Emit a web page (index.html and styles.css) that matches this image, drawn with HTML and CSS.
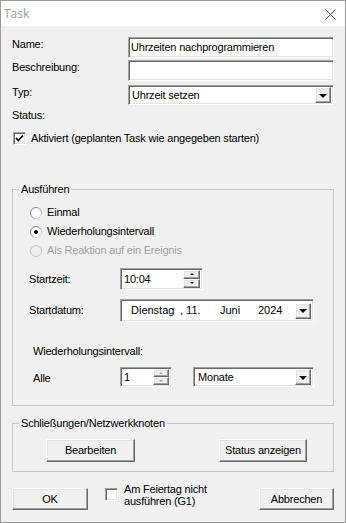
FILE: index.html
```html
<!DOCTYPE html>
<html lang="de">
<head>
    <meta charset="UTF-8">
    <title>Task</title>
    <link rel="stylesheet" href="styles.css">
</head>
<body>
    <div class="window">
        <div class="titlebar">
            <span class="title">Task</span>
            <svg class="close" width="11" height="11" viewBox="0 0 11 11">
                <path d="M0.5 0.5 L10.5 10.5 M10.5 0.5 L0.5 10.5" stroke="#5a5a5a" stroke-width="1" fill="none"/>
            </svg>
        </div>
        <div class="content">
            <div class="row row-name">
                <span class="lbl">Name:</span>
                <div class="edit sunken">Uhrzeiten nachprogrammieren</div>
            </div>
            <div class="row row-desc">
                <span class="lbl">Beschreibung:</span>
                <div class="edit sunken"></div>
            </div>
            <div class="row row-typ">
                <span class="lbl">Typ:</span>
                <div class="combo sunken">
                    <span class="combo-text">Uhrzeit setzen</span>
                    <span class="drop raised"><i class="tri"></i></span>
                </div>
            </div>
            <div class="status">Status:</div>
            <div class="check-row">
                <span class="check sunken">
                    <svg width="9" height="9" viewBox="0 0 9 9"><path d="M1 4 L3.3 6.5 L8 1.5" stroke="#000" stroke-width="1.8" fill="none"/></svg>
                </span>
                <span>Aktiviert (geplanten Task wie angegeben starten)</span>
            </div>

            <fieldset class="group group-run">
                <legend>Ausführen</legend>
                <div class="radio-row">
                    <svg class="radio" width="12" height="12" viewBox="0 0 12 12">
                        <circle cx="6" cy="6" r="5.5" fill="#fff" stroke="url(#ring)"/>
                    </svg>
                    <span>Einmal</span>
                </div>
                <div class="radio-row">
                    <svg class="radio" width="12" height="12" viewBox="0 0 12 12">
                        <defs>
                            <linearGradient id="ring" x1="0" y1="0" x2="1" y2="1">
                                <stop offset="0" stop-color="#6e6e6e"/>
                                <stop offset="0.5" stop-color="#9a9a9a"/>
                                <stop offset="1" stop-color="#f4f4f4"/>
                            </linearGradient>
                        </defs>
                        <circle cx="6" cy="6" r="5.5" fill="#fff" stroke="url(#ring)"/>
                        <circle cx="6" cy="6" r="2" fill="#000"/>
                    </svg>
                    <span>Wiederholungsintervall</span>
                </div>
                <div class="radio-row disabled">
                    <svg class="radio" width="12" height="12" viewBox="0 0 12 12">
                        <circle cx="6" cy="6" r="5.5" fill="#f0f0f0" stroke="#c4c4c4"/>
                    </svg>
                    <span>Als Reaktion auf ein Ereignis</span>
                </div>

                <div class="field-row row-time">
                    <span class="lbl-inner">Startzeit:</span>
                    <div class="spin spin-time sunken">
                        <span class="spin-text">10:04</span>
                        <span class="spin-btns">
                            <span class="spin-btn raised"><i class="tri-up"></i></span>
                            <span class="spin-btn raised"><i class="tri-small"></i></span>
                        </span>
                    </div>
                </div>
                <div class="field-row row-date">
                    <span class="lbl-inner">Startdatum:</span>
                    <div class="date sunken">
                        <span class="d-day">Dienstag</span>
                        <span class="d-num">, 11.</span>
                        <span class="d-month">Juni</span>
                        <span class="d-year">2024</span>
                        <span class="drop raised"><i class="tri"></i></span>
                    </div>
                </div>
                <div class="interval-lbl">Wiederholungsintervall:</div>
                <div class="field-row row-every">
                    <span class="lbl-every">Alle</span>
                    <div class="spin spin-count sunken">
                        <span class="spin-text">1</span>
                        <span class="spin-btns faded">
                            <span class="spin-btn raised"><i class="tri-up"></i></span>
                            <span class="spin-btn raised"><i class="tri-small"></i></span>
                        </span>
                    </div>
                    <div class="combo combo-unit sunken">
                        <span class="combo-text">Monate</span>
                        <span class="drop raised"><i class="tri"></i></span>
                    </div>
                </div>
            </fieldset>

            <fieldset class="group group-locks">
                <legend>Schließungen/Netzwerkknoten</legend>
                <div class="btn-row">
                    <span class="button raised btn-edit">Bearbeiten</span>
                    <span class="button raised btn-status">Status anzeigen</span>
                </div>
            </fieldset>

            <div class="footer">
                <span class="button raised btn-ok">OK</span>
                <span class="check sunken check-holiday"></span>
                <span class="holiday-text">Am Feiertag nicht<br>ausführen (G1)</span>
                <span class="button raised btn-cancel">Abbrechen</span>
            </div>
        </div>
    </div>
</body>
</html>
```

FILE: styles.css
```css
* {
    box-sizing: border-box;
}
body {
    margin: 0;
    background-color: #ffffff;
    font-family: "Liberation Sans", Arial, sans-serif;
    font-size: 11px;
    line-height: 13px;
    letter-spacing: -0.2px;
    color: #000;
}
.window {
    width: 346px;
    height: 523px;
    border: 1px solid #9a9a9a;
    background-color: #f0f0f0;
    display: flex;
    flex-direction: column;
}
.titlebar {
    height: 25px;
    background-color: #fff;
    display: flex;
    align-items: center;
    justify-content: space-between;
    padding: 0 9px 0 3px;
}
.title {
    font-family: "Open Sans", "Noto Sans", sans-serif;
    font-size: 12px;
    letter-spacing: 0;
    color: #9a9a9a;
}
.close {
    display: block;
    margin-top: 1px;
}
.content {
    padding: 11px 11px 0 11px;
}

/* 3d borders */
.sunken {
    background-color: #fff;
    border: 1px solid;
    border-color: #a0a0a0 #fff #fff #a0a0a0;
    box-shadow: inset 1px 1px 0 #696969, inset -1px -1px 0 #e3e3e3;
}
.raised {
    background-color: #f0f0f0;
    border: 1px solid;
    border-color: #fff #696969 #696969 #fff;
    box-shadow: inset -1px -1px 0 #a0a0a0, inset 1px 1px 0 #e3e3e3;
}

/* top form */
.row {
    display: flex;
    align-items: flex-start;
}
.lbl {
    width: 116px;
    padding-top: 1px;
}
.row-name .edit,
.row-desc .edit {
    width: 206px;
    height: 21px;
}
.row-desc {
    margin-top: 2px;
}
.row-typ {
    margin-top: 4px;
}
.edit {
    padding: 3px 0 0 2px;
    white-space: nowrap;
}
.combo {
    width: 206px;
    height: 20px;
    display: flex;
    align-items: center;
    padding: 2px;
}
.combo-text {
    flex: 1;
    padding-left: 1px;
}
.drop {
    width: 16px;
    height: 16px;
    display: flex;
    align-items: center;
    justify-content: center;
}
.tri {
    width: 0;
    height: 0;
    border-left: 4px solid transparent;
    border-right: 4px solid transparent;
    border-top: 4px solid #000;
    margin-top: 1px;
}
.status {
    margin-top: 4px;
}
.check-row {
    margin-top: 10px;
    display: flex;
    align-items: center;
    height: 13px;
    padding-left: 1px;
}
.check {
    width: 13px;
    height: 13px;
    display: flex;
    align-items: center;
    justify-content: center;
    margin-right: 5px;
}
.check svg {
    display: block;
}

/* group boxes */
.group {
    margin: 0;
    padding: 0;
    border: 1px solid #c6c6c6;
    min-width: 0;
}
.group legend {
    margin-left: 6px;
    padding: 0 2px;
    line-height: 13px;
}
.group-run {
    margin-top: 38px;
    padding-top: 7px;
    padding-bottom: 18px;
}
.radio-row {
    height: 19px;
    display: flex;
    align-items: center;
    padding-left: 17px;
}
.radio {
    display: block;
    margin-right: 5px;
}
.disabled {
    color: #a0a0a0;
}
.field-row {
    display: flex;
    align-items: center;
}
.lbl-inner {
    width: 107px;
    padding-left: 16px;
}
.row-time {
    margin-top: 8px;
}
.row-date {
    margin-top: 9px;
}
.spin {
    display: flex;
    align-items: center;
    padding: 2px;
}
.spin-time {
    width: 83px;
    height: 22px;
}
.spin-text {
    flex: 1;
    padding-left: 1px;
}
.spin-btns {
    display: flex;
    flex-direction: column;
    width: 17px;
    height: 18px;
    margin-top: -1px;
}
.spin-btn {
    flex: 1;
    display: flex;
    align-items: center;
    justify-content: center;
}
.tri-up {
    width: 0;
    height: 0;
    border-left: 2px solid transparent;
    border-right: 2px solid transparent;
    border-bottom: 2px solid #000;
}
.tri-small {
    width: 0;
    height: 0;
    border-left: 2px solid transparent;
    border-right: 2px solid transparent;
    border-top: 2px solid #000;
}
.faded .tri-up {
    border-bottom-color: #a0a0a0;
}
.faded .tri-small {
    border-top-color: #a0a0a0;
}
.date {
    width: 194px;
    height: 23px;
    display: flex;
    align-items: center;
    padding: 2px;
    letter-spacing: 0;
}
.d-day {
    width: 49px;
    margin-left: 8px;
}
.d-num {
    width: 40px;
}
.d-month {
    width: 38px;
}
.d-year {
    flex: 1;
}
.interval-lbl {
    margin-top: 23px;
    padding-left: 20px;
}
.row-every {
    margin-top: 9px;
}
.lbl-every {
    width: 107px;
    padding-left: 20px;
    padding-top: 2px;
}
.spin-count {
    width: 52px;
    height: 20px;
}
.spin-count .spin-btns {
    width: 16px;
    height: 16px;
    margin-top: 0;
}
.combo-unit {
    width: 121px;
    margin-left: 21px;
}
.combo-unit .combo-text {
    padding-left: 2px;
}
.group-locks {
    margin-top: 11px;
    padding: 9px 0 9px 0;
}
.btn-row {
    display: flex;
    padding-left: 33px;
}
.button {
    height: 23px;
    display: flex;
    align-items: center;
    justify-content: center;
}
.btn-edit {
    width: 89px;
}
.btn-status {
    width: 88px;
    margin-left: 84px;
}

/* footer */
.footer {
    margin-top: 16px;
    display: flex;
    align-items: flex-start;
}
.btn-ok {
    width: 76px;
    height: 22px;
}
.check-holiday {
    margin-left: 17px;
    margin-right: 6px;
}
.holiday-text {
    margin-top: -5px;
    line-height: 12px;
}
.btn-cancel {
    width: 75px;
    height: 22px;
    margin-left: auto;
}
```
